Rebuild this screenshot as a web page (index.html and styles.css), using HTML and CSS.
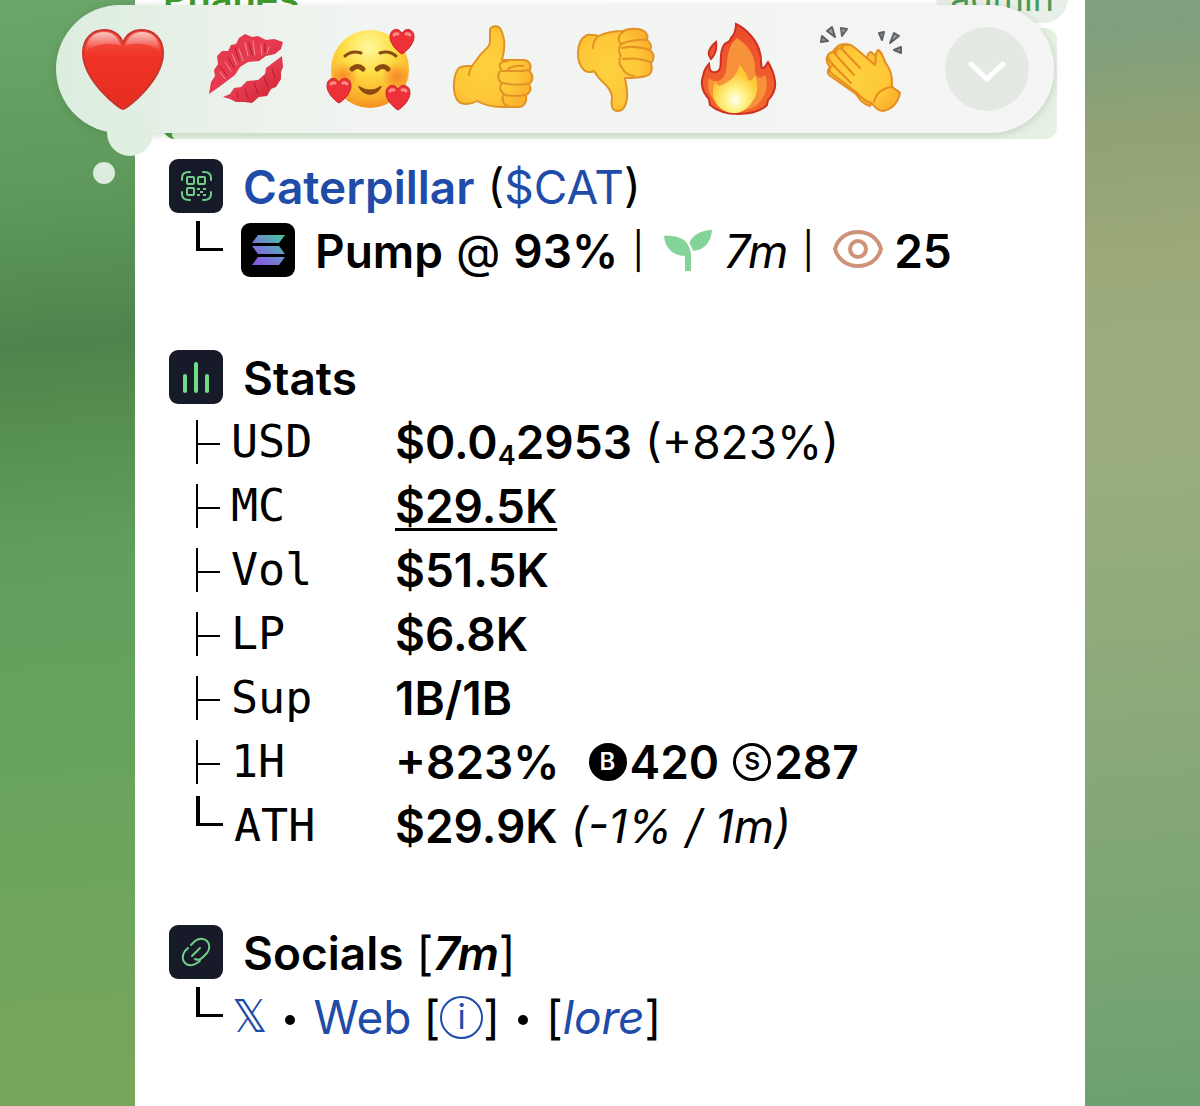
FILE: index.html
```
<!DOCTYPE html>
<html lang="en">
<head>
    <meta charset="UTF-8">
    <meta name="viewport" content="width=device-width, initial-scale=1.0">
    <title>Caterpillar ($CAT)</title>
    <link rel="stylesheet" href="styles.css">
</head>
<body>
    <main class="message">
        <div class="message-head">
            <span class="sender">Phanes</span>
            <span class="badge">admin</span>
        </div>
        <div class="quote"></div>

        <section class="block">
            <h1 class="line">
                <svg class="tile" viewBox="0 0 54 54" fill="none" stroke="#6fcf86" stroke-width="2">
                    <rect width="54" height="54" rx="9" fill="#171a29" stroke="none"/>
                    <path d="M13 21v-2q0-6 7-6h1M34 13h1q7 0 7 6v2M42 33v2q0 6-7 6h-1M21 41h-1q-7 0-7-6v-2" stroke-linecap="round"/>
                    <rect x="18" y="18" width="7" height="7" rx="1"/>
                    <rect x="29" y="18" width="7" height="7" rx="1"/>
                    <rect x="18" y="29" width="7" height="7" rx="1"/>
                    <path d="M28 30h3M34 30h3M31 33h3M28 36h3M34 36h3"/>
                </svg>
                <span><a class="strong" href="#">Caterpillar</a> (<a href="#">$CAT</a>)</span>
            </h1>
            <div class="line">
                <i class="branch end"></i>
                <svg class="tile" viewBox="0 0 54 54">
                    <defs>
                        <linearGradient id="sol" gradientUnits="userSpaceOnUse" x1="14" y1="42" x2="40" y2="12">
                            <stop offset="0" stop-color="#8a52e8"/>
                            <stop offset=".5" stop-color="#6d86cf"/>
                            <stop offset="1" stop-color="#48c3a0"/>
                        </linearGradient>
                    </defs>
                    <rect width="54" height="54" rx="9" fill="#000"/>
                    <path fill="url(#sol)" d="M17 12h27l-6 8H11zM11 23h27l6 8H17zM17 34h27l-6 8H11z"/>
                </svg>
                <span><b>Pump</b> @ <b>93%</b></span>
                <span class="pipe">|</span>
                <svg class="sprout" viewBox="0 0 48 44">
                    <path fill="#84d49a" d="M0 7c13-1 26 3 27 18v17h-6V27C9 27 1 19 0 7zM48 1c-1 13-8 20-19 21l-4-8C29 6 37 1 48 1z"/>
                    <path d="M23 11l6 13" stroke="#fff" stroke-width="2"/>
                </svg>
                <em>7m</em>
                <span class="pipe">|</span>
                <svg class="eye" viewBox="0 0 52 40" fill="none" stroke="#cf9279" stroke-width="4">
                    <path d="M3 20C6 9 15 3 26 3s20 6 23 17C46 31 37 37 26 37S6 31 3 20z"/>
                    <circle cx="26" cy="20" r="8"/>
                </svg>
                <b>25</b>
            </div>
        </section>

        <section class="block">
            <h2 class="line">
                <svg class="tile" viewBox="0 0 54 54" stroke="#6fdc86" stroke-width="4" stroke-linecap="round">
                    <rect width="54" height="54" rx="9" fill="#171a29" stroke="none"/>
                    <path d="M16 26v15M27 14v27M38 26v15"/>
                </svg>
                <span class="strong">Stats</span>
            </h2>
            <table class="stats">
                <tr><th><i class="branch"></i>USD</th><td><b>$0.0<sub>4</sub>2953</b> (+823%)</td></tr>
                <tr><th><i class="branch"></i>MC</th><td><b class="underline">$29.5K</b></td></tr>
                <tr><th><i class="branch"></i>Vol</th><td><b>$51.5K</b></td></tr>
                <tr><th><i class="branch"></i>LP</th><td><b>$6.8K</b></td></tr>
                <tr><th><i class="branch"></i>Sup</th><td><b>1B/1B</b></td></tr>
                <tr>
                    <th><i class="branch"></i>1H</th>
                    <td class="trades"><b>+823%</b><b class="trade buys"><span class="coin filled">B</span>420</b><b class="trade"><span class="coin">S</span>287</b></td>
                </tr>
                <tr><th><i class="branch end"></i>ATH</th><td><b>$29.9K</b> <em>(-1% / 1m)</em></td></tr>
            </table>
        </section>

        <section class="block">
            <h2 class="line">
                <svg class="tile" viewBox="0 0 54 54" fill="none" stroke="#6fcf86" stroke-width="2" stroke-linecap="round">
                    <rect width="54" height="54" rx="9" fill="#171a29" stroke="none"/>
                    <path d="M22 20l4-4c4-3 9-3 12 0s3 8 0 12l-5 5c-2 2-5 2-7 1M31 36l-3 2c-4 3-9 3-12 0s-3-8 0-12l3-3M23 31l8-8"/>
                </svg>
                <span><b>Socials</b> [<b><em>7m</em></b>]</span>
            </h2>
            <div class="line socials">
                <i class="branch end"></i>
                <a class="x-link" href="#">𝕏</a>
                <i class="dot"></i>
                <a href="#">Web</a>
                <span class="bracket">[<a class="info" href="#">i</a>]</span>
                <i class="dot"></i>
                <span>[<a href="#"><em>lore</em></a>]</span>
            </div>
        </section>
    </main>

    <svg class="defs" aria-hidden="true">
        <defs>
            <linearGradient id="red" x1="0" y1="0" x2="0" y2="1">
                <stop offset="0" stop-color="#f4574b"/>
                <stop offset=".35" stop-color="#ee3324"/>
                <stop offset="1" stop-color="#e52d20"/>
            </linearGradient>
            <linearGradient id="shine" x1="0" y1="0" x2="0" y2="1">
                <stop offset="0" stop-color="#fff" stop-opacity=".65"/>
                <stop offset="1" stop-color="#fff" stop-opacity="0"/>
            </linearGradient>
            <linearGradient id="lips" x1="0" y1="0" x2="1" y2="1">
                <stop offset="0" stop-color="#e2394c"/>
                <stop offset=".5" stop-color="#e63a50"/>
                <stop offset="1" stop-color="#cc1f2e"/>
            </linearGradient>
            <radialGradient id="face" cx=".48" cy=".22" r=".8">
                <stop offset="0" stop-color="#fff9a0"/>
                <stop offset=".4" stop-color="#fede45"/>
                <stop offset=".8" stop-color="#fbb02c"/>
                <stop offset="1" stop-color="#f08c20"/>
            </radialGradient>
            <radialGradient id="blush">
                <stop offset="0" stop-color="#f5601e" stop-opacity=".6"/>
                <stop offset="1" stop-color="#f5601e" stop-opacity="0"/>
            </radialGradient>
            <radialGradient id="skin" cx=".4" cy=".5" r=".6">
                <stop offset="0" stop-color="#fed13e"/>
                <stop offset=".7" stop-color="#fec738"/>
                <stop offset="1" stop-color="#fbb22e"/>
            </radialGradient>
            <radialGradient id="glow" cx=".5" cy=".72" r=".55">
                <stop offset="0" stop-color="#fffff0"/>
                <stop offset=".4" stop-color="#fff48a"/>
                <stop offset="1" stop-color="#fdc934"/>
            </radialGradient>
            <linearGradient id="flame" x1="0" y1="0" x2="0" y2="1">
                <stop offset="0" stop-color="#ea4a2b"/>
                <stop offset="1" stop-color="#f36a2c"/>
            </linearGradient>
            <g id="mini-heart">
                <path fill="#ee3038" stroke="#c5222b" d="M0 13C-4 11-12 3-12-4c0-9 10-10 12-3 2-7 12-6 12 3 0 7-8 15-12 17z"/>
                <path fill="none" stroke="#ff8f88" stroke-width="3" stroke-linecap="round" d="M-8-6q1-2 4-1M4-7q3-1 4 1"/>
            </g>
        </defs>
    </svg>

    <nav class="reactions" aria-label="Reactions">
        <button aria-label="Heart">
            <svg viewBox="0 0 84 84">
                <path fill="url(#red)" stroke="#c8352e" stroke-width="2" d="M42 82C38 82 2 53 2 26 2 11 12 3 23 3c10 0 16 5 19 13C45 8 51 3 61 3c11 0 21 8 21 23 0 27-36 56-40 56z"/>
                <path fill="url(#shine)" d="M5 24C6 10 14 5 23 5c9 0 14 5 17 14-10-4-24-3-35 5zM79 24C78 10 70 5 61 5c-9 0-14 5-17 14 10-4 24-3 35 5z"/>
            </svg>
        </button>
        <button aria-label="Kiss">
            <svg viewBox="0 0 84 84">
                <path fill="url(#lips)" d="M5 67l2-12 4-6-1-6 4-6-1-8 5-5 6 0 3-6 5-1 3-6 6-4 7 3 6-1 8 4 8-1 9 3-2 7-6 5-9 2-7 5-11 1-8 5-5 8-8 6-8 6z"/>
                <path fill="url(#lips)" d="M19 70l7-3 4-6 7-1 6-6 11-1 7-6 1-6 8-6 8-6 1 11-2 5 0 7-5 8-5 2-4 7-8 1-7 6-8-1-8 0-6-3z"/>
                <path fill="none" stroke="#f48d98" stroke-linecap="round" d="M41 16l3 13M49 14l2 14M35 22l4 12M28 27l5 11M21 35l6 9M57 17l1 11M65 20l-2 6M16 45l5 7"/>
                <path fill="none" stroke="#b91a2c" stroke-linecap="round" d="M45 16l3 12M31 21l4 12M24 30l6 11M16 39l7 10M61 16l0 9M41 61l3 10M50 56l4 11M60 50l4 10M68 42l3 9M33 65l1 6"/>
            </svg>
        </button>
        <button aria-label="Smiling face with hearts">
            <svg viewBox="0 0 84 84">
                <circle cx="43" cy="42" r="39" fill="url(#face)"/>
                <circle cx="17" cy="49" r="14" fill="url(#blush)"/>
                <circle cx="69" cy="49" r="14" fill="url(#blush)"/>
                <g fill="none" stroke="#8a4a12" stroke-linecap="round" stroke-width="3">
                    <path d="M18 29q7-6 16-3M53 26q9-3 16 3"/>
                    <path stroke-width="5" d="M25 42q6-5 11 0M50 42q6-5 11 0"/>
                </g>
                <path fill="#8a4a12" d="M32 59q11 7 22 0c1 0 1 1 0 2-5 9-17 9-22 0-1-1-1-2 0-2z"/>
                <use href="#mini-heart" x="75" y="14"/>
                <use href="#mini-heart" x="12" y="63"/>
                <use href="#mini-heart" x="71" y="70"/>
            </svg>
        </button>
        <button aria-label="Thumbs up">
            <svg viewBox="0 0 84 84" fill="url(#skin)" stroke="#e29325" stroke-width="2" stroke-linejoin="round" stroke-linecap="round">
                <path d="M40 3c1-5 9-5 11 0 3 6 5 16 1 30l21 0c8 0 9 8 6 11 5 4 4 10 0 13 3 5 1 9-3 11 1 6-1 12-8 12H52c-9 0-18-2-25-6-7 4-15 4-19 0-6-8-5-24 0-32 3-4 9-3 14-3 4-5 6-9 10-13 5-5 8-7 8-12z"/>
                <path fill="none" d="M51 42c-4-6 2-8 7-8M50 44c-3 5-2 10 2 12-4 5-1 9 2 11-3 5-1 9 3 12M52 44h20q4 0 6-1M53 56q13 3 24 1M55 68q10 2 20 0M58 42q6-4 15-3M22 39c-2 3-3 6-3 9"/>
            </svg>
        </button>
        <button aria-label="Thumbs down">
            <svg viewBox="0 0 84 84" fill="url(#skin)" stroke="#e29325" stroke-width="2" stroke-linejoin="round" stroke-linecap="round">
                <path d="M14 8c4-1 8 0 12 1 8-4 16-5 24-5 6-3 16-3 21 0 4 3 4 6 3 9 4 3 5 7 3 10 5 4 4 10 1 13 2 7 0 12-5 13-7 2-15 2-21 2 1 7 3 12 2 20-1 8-3 13-9 13-7 0-7-7-6-13 0-6-3-10-7-14-5-4-8-8-11-13-4 2-8 1-10-1C3 36 2 14 14 8z"/>
                <path fill="none" d="M51 4c-6 4-7 9-3 13-3 4-2 9 0 12-3 4-2 9 2 13 1 3 5 6 11 7M48 17q13-5 26-4M49 21q14-3 28 2M50 32q14-2 27 3M25 9c-3 3-5 7-5 12"/>
            </svg>
        </button>
        <button aria-label="Fire">
            <svg viewBox="0 0 84 84">
                <path fill="url(#flame)" stroke="#cf2f22" stroke-width="2" d="M40-3c11 5 22 18 24 29 2 6 0 11 2 15 4 1 4-4 6-6 3 5 6 12 7 19 1 8-3 15-7 19l-1 5c-7 7-18 9-29 9s-21-3-28-9l-1-6C7 66 4 57 7 49c1-5 3-9 6-12 0 6 2 9 7 8 9-2 1-17 8-27 2-4 6-1 7-7 4-4 5-9 5-14zM20 15c1 7 0 12-5 17-5-6-1-12 5-17z"/>
                <path fill="#f7923a" d="M41 11c10 6 18 17 18 29-1 9 4 14 10 8 4 10 1 22-8 30-12 8-26 8-38 0-9-7-13-17-10-27 6 6 15 3 17-7 2-13 1-25 11-33z"/>
                <path fill="url(#glow)" d="M44 38c3 6 8 9 8 15 3 2 6-2 7-5 3 9 4 18-3 27-5 8-13 12-20 11-9-1-17-7-19-18 0-5 0-11 3-14 0 4 3 6 6 4 8-4 15-9 18-20z"/>
            </svg>
        </button>
        <button aria-label="Clapping hands">
            <svg viewBox="0 0 84 84">
                <g fill="#9a9da1" stroke="#5e6166" stroke-width="2" stroke-linejoin="round">
                    <path d="M3 9l6 5-7 1zM8 4l5-4 3 10zM22 1l6 1-5 7zM60 6l5-1-2 8zM75 6l5 3-9 7zM75 23l7-3v6z"/>
                </g>
                <g fill="url(#skin)" stroke="#e58d1f" stroke-width="2" stroke-linejoin="round" stroke-linecap="round">
                    <path d="M16 22c6-8 14-5 20 1l12 9c1-4 0-6 4-7 6 4 9 9 12 15l-4 26-9 13c-7-2-10-6-14-12L10 48c-3-4 0-6 1-8-4-5-5-10 0-12z"/>
                    <path d="M22 21c4-5 9-4 13-1l21 18c2-5-1-11 3-15 6 3 4 9 9 15 6 8 5 16 5 21 2 4 6 4 8 7-2 9-7 16-17 18-6 0-8-5-12-8-7-2-11-7-15-11L12 46c-4-5 1-8 3-7l-5-6c-4-6 3-10 7-6-1-3 1-6 5-6z"/>
                    <path fill="none" d="M22 21l19 20M16 27l19 21M15 39l17 17M73 60c-10 1-16 7-18 15"/>
                </g>
            </svg>
        </button>
        <button class="more" aria-label="More reactions">
            <svg viewBox="0 0 84 84">
                <path d="M26 37l16 15 16-15" fill="none" stroke="#fff" stroke-width="5" stroke-linecap="round" stroke-linejoin="round"/>
            </svg>
        </button>
    </nav>
    <div class="tail-dot"></div>
</body>
</html>
```
FILE: styles.css
```
* {
    box-sizing: border-box;
}
body {
    margin: 0;
    min-height: 100vh;
    overflow: hidden;
    position: relative;
    padding: 0 115px 0 135px;
    font-family: "Inter", "Liberation Sans", sans-serif;
    font-size: 46px;
    line-height: 64px;
    color: #000;
    background:
        linear-gradient(175deg, #6aa56a 0%, #5f9a5c 16%, #4e844c 30%, #57914f 38%, #629e5c 48%, #66a35e 62%, #7aa65a 100%) left / 50% 100% no-repeat,
        linear-gradient(175deg, #84a584 0%, #7ea07e 6%, #93a273 16%, #9caa7a 27%, #9bad7f 42%, #8faa7a 60%, #7fa675 80%, #6ba070 100%) right / 50% 100% no-repeat;
}
a {
    color: #1e4ca8;
    text-decoration: none;
}
b, .strong {
    font-weight: 600;
}
h1, h2 {
    margin: 0;
    font-size: inherit;
    font-weight: 400;
}
sub {
    font-size: 27px;
    line-height: 0;
    vertical-align: -6px;
}

/* message */
.message {
    display: flow-root;
    min-height: 100vh;
    background: #fff;
    padding: 0 17px 0 34px;
}
.message-head {
    display: flex;
    justify-content: space-between;
    height: 50px;
    margin-top: -27px;
    color: #3f9a2c;
    font-size: 38px;
    line-height: 50px;
}
.sender {
    font-weight: 600;
    margin-left: -6px;
}
.badge {
    padding: 0 14px;
    border-radius: 25px;
    background: #e9efe9;
    color: #4c9a55;
    font-size: 36px;
}
.quote {
    height: 111px;
    margin: 5px 11px 16px -6px;
    border-left: 8px solid #4a9c35;
    border-radius: 12px;
    background: #e6f1e3;
}
.block {
    margin-bottom: 63px;
}
.line {
    display: flex;
    align-items: center;
    height: 64px;
    white-space: nowrap;
}
.tile {
    width: 54px;
    height: 54px;
    flex: none;
    margin-right: 20px;
    margin-bottom: 2px;
}
.pipe {
    margin-left: 14px;
    font-size: 36px;
}
.sprout {
    width: 48px;
    height: 44px;
    margin: 0 12px 0 20px;
}
.eye {
    width: 52px;
    height: 40px;
    margin: 0 10px 4px 18px;
}

/* tree lines */
.branch {
    flex: none;
    width: 24px;
    height: 44px;
    margin: 0 11px 0 27px;
    border-left: 2px solid #000;
}
.branch::after {
    content: "";
    display: block;
    height: 23px;
    border-bottom: 2px solid #000;
}
.branch.end {
    width: 27px;
    height: 30px;
    margin-bottom: 30px;
    border-left-width: 4px;
    border-bottom: 3px solid #000;
}
.branch.end::after {
    display: none;
}
.line .branch.end {
    margin-right: 18px;
}
.socials .branch.end {
    margin-right: 9px;
}

/* stats */
.stats, .stats tbody {
    display: block;
}
.stats tr {
    display: flex;
    height: 64px;
}
.stats th {
    display: flex;
    align-items: center;
    width: 226px;
    font-family: "DejaVu Sans Mono", monospace;
    font-size: 45px;
    font-weight: 400;
    text-align: left;
    padding: 0;
}
.stats td {
    padding: 0;
    white-space: nowrap;
}
.underline {
    text-decoration: underline;
    text-decoration-thickness: 3px;
    text-underline-offset: 5px;
}
.trades, .trade {
    display: flex;
    align-items: center;
}
.trade {
    gap: 3px;
    margin-left: 14px;
}
.trade.buys {
    margin-left: 29px;
}
.coin {
    display: flex;
    align-items: center;
    justify-content: center;
    width: 38px;
    height: 38px;
    border: 3px solid #000;
    border-radius: 50%;
    font-size: 24px;
    line-height: 32px;
}
.coin.filled {
    background: #000;
    color: #fff;
}

/* socials */
.x-link {
    font-family: "DejaVu Sans", sans-serif;
    font-size: 44px;
}
.dot {
    width: 10px;
    height: 10px;
    margin: 6px 18px 0;
    border-radius: 50%;
    background: #000;
}
.bracket {
    display: flex;
    align-items: center;
    margin-left: 12px;
}
.info {
    display: flex;
    align-items: center;
    justify-content: center;
    width: 43px;
    height: 43px;
    border: 2px solid #1e4ca8;
    border-radius: 50%;
    font-size: 34px;
    line-height: 38px;
}

/* reactions */
.defs {
    position: absolute;
    width: 0;
    height: 0;
}
.reactions {
    position: absolute;
    top: 5px;
    left: 56px;
    right: 146px;
    height: 128px;
    padding: 0 25px;
    display: flex;
    align-items: center;
    gap: 39px;
    border-radius: 64px;
    background: linear-gradient(90deg, #dcedde 0%, #e9f1e9 16%, #f1f4f1 30%, #f4f5f4 100%);
    box-shadow: 0 2px 8px rgba(40, 80, 40, 0.2);
}
.reactions::before {
    content: "";
    position: absolute;
    left: 51px;
    bottom: -23px;
    width: 46px;
    height: 46px;
    border-radius: 50%;
    background: #e0efe1;
}
.reactions button {
    position: relative;
    width: 84px;
    height: 84px;
    padding: 0;
    border: 0;
    background: none;
}
.reactions svg {
    display: block;
    width: 84px;
    height: 84px;
    overflow: visible;
}
.reactions .more {
    margin-left: auto;
    border-radius: 50%;
    background: #e4eae3;
}
.tail-dot {
    position: absolute;
    top: 162px;
    left: 93px;
    width: 22px;
    height: 22px;
    border-radius: 50%;
    background: #dbecdc;
}
```
